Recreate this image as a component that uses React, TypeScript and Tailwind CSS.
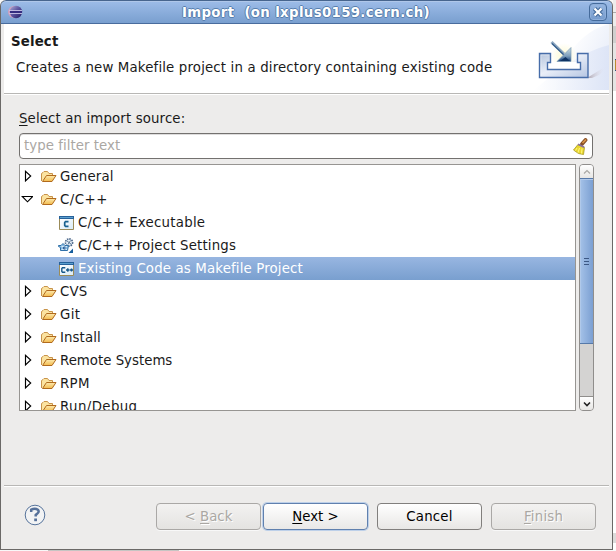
import React from "react";

function EclipseLogo() {
  return (
    <svg className="ml-[7px] h-[14px] w-[15px] shrink-0" viewBox="0 0 15 14">
      <defs>
        <linearGradient id="ecl" x1="0" y1="0" x2="1" y2="1">
          <stop offset="0" stopColor="#b3add6" />
          <stop offset=".45" stopColor="#5d57a2" />
          <stop offset="1" stopColor="#20185f" />
        </linearGradient>
      </defs>
      <ellipse cx="6.2" cy="7" rx="6.2" ry="6.100" fill="#d3a0bd" />
      <ellipse cx="8" cy="7" rx="6.200" ry="6.200" fill="url(#ecl)" />
      <path d="M1 5.5H14M1 8.5H14" stroke="#c8c4e6" strokeWidth=".9" />
      <path d="M2 7H14" stroke="#342d80" strokeWidth="2" />
    </svg>
  );
}

function ImportBanner() {
  return (
    <svg className="h-[66px] w-[75px] shrink-0" viewBox="0 0 75 66">
      <defs>
        <linearGradient id="bnA" x1="0" y1="0" x2="1" y2=".6">
          <stop offset=".3" stopColor="#fff" />
          <stop offset="1" stopColor="#e8edf9" />
        </linearGradient>
        <linearGradient id="bnB">
          <stop offset="0" stopColor="#fff" />
          <stop offset="1" stopColor="#dbe3f6" />
        </linearGradient>
        <linearGradient id="tray" x1="0" y1="0" x2="1" y2="1">
          <stop offset="0" stopColor="#b4c4dc" />
          <stop offset=".45" stopColor="#e9eef8" />
          <stop offset="1" stopColor="#b5c5e2" />
        </linearGradient>
        <radialGradient id="glow">
          <stop offset="0" stopColor="#fdfad0" />
          <stop offset="1" stopColor="#fdfad0" stopOpacity="0" />
        </radialGradient>
        <linearGradient id="shade">
          <stop offset="0" stopColor="#a99fa9" />
          <stop offset="1" stopColor="#e4e2ee" stopOpacity="0" />
        </linearGradient>
        <linearGradient id="arrowHead" x1="0" y1="0" x2="0" y2="1">
          <stop offset=".2" stopColor="#b4cbd8" />
          <stop offset=".6" stopColor="#7fa0bd" />
          <stop offset="1" stopColor="#123d79" />
        </linearGradient>
      </defs>
      <path d="M75 0C45 8 28 34 22 66H75Z" fill="url(#bnA)" />
      <path d="M75 21C48 28 25 45 0 66H75Z" fill="url(#bnB)" opacity=".85" />
      <path d="M53 54L69 44Q73 45 65 51L58 54Z" fill="url(#shade)" />
      <circle cx="30" cy="32" r="13" fill="url(#glow)" />
      <path d="M13.500 45.500H46.500V38H13.500Z" fill="#fff" />
      <path d="M5.500 29.500H16.500V38.500H13.500V45.500H46.500V38.500H43.500V29.500H54V53.500H5.500Z" fill="url(#tray)" stroke="#476da9" strokeWidth="1.400" />
      <path d="M7 52V31H15" fill="none" stroke="#fff" strokeOpacity=".35" />
      <path d="M17.500 18L30 30" stroke="#8ea8c1" strokeWidth="3" />
      <path d="M18 19.500L31 32" stroke="#355e8c" strokeWidth="1.300" />
      <path d="M37 23.500V37.500H23Z" fill="url(#arrowHead)" stroke="#7c9bb8" strokeWidth=".7" />
      <path d="M26 37L31.500 33L36 37Z" fill="#0f3463" />
    </svg>
  );
}

function Folder() {
  return (
    <svg className="h-[13px] w-4 shrink-0" viewBox="0 0 16 13">
      <defs>
        <linearGradient id="fold" x1="0" y1="0" x2="0" y2="1">
          <stop offset="0" stopColor="#fdeaaf" />
          <stop offset="1" stopColor="#f2ba4c" />
        </linearGradient>
      </defs>
      <path d="M.5 11V3.500L2 2.500L3 1.500H6.500L8 3.500H11.500V6" fill="#fbe3a0" stroke="#c8934a" />
      <path d="M1.500 11.500L5.500 5.500H15L11 11.500Z" fill="url(#fold)" stroke="#b16a1d" />
    </svg>
  );
}

function CodeIcon({ plus = false }: { plus?: boolean }) {
  return (
    <svg className="h-[14px] w-[15px] shrink-0" viewBox="0 0 15 14">
      <defs>
        <linearGradient id="codebg" x2="1" y2="1">
          <stop stopColor="#fff" />
          <stop offset="1" stopColor="#d8ebf7" />
        </linearGradient>
      </defs>
      <path d="M.5 2.500V13.500H14.500V2.500" fill="url(#codebg)" stroke="#9a8b58" />
      <path d="M0 0H15V3H0Z" fill="#27619a" />
      <path d="M1 1.500H14" stroke="#5ba0cf" />
      {plus ? (
        <path d="M6.300 5.700H3.500L2.800 6.500V9.500L3.500 10.300H6.300M7 8H10.600M8.800 6.200V9.800M11 8H14M12.500 6.500V9.500" fill="none" stroke="#17588a" strokeWidth="1.4" />
      ) : (
        <path d="M9.500 5.700H6.500L5.700 6.500V9.500L6.500 10.300H9.500" fill="none" stroke="#17618f" strokeWidth="1.7" />
      )}
    </svg>
  );
}

function SettingsIcon() {
  return (
    <svg className="h-[15px] w-4 shrink-0" viewBox="0 0 16 15">
      <circle cx="11" cy="4.500" r="3.600" fill="#e5eff8" stroke="#4b6688" strokeWidth="1.6" strokeDasharray="1.5 .9" />
      <path d="M8.500 2.500L13.500 6.500M10 6.500L12.500 2.500" stroke="#4e6b89" strokeWidth=".9" />
      <path d="M.5 7.500H3L5 5.500L7 7.500H10.500L9.500 12.500H2.500V9.500L.5 8.500Z" fill="#8dbce2" stroke="#2f70a9" />
      <path d="M3.500 8.500H9M3.500 11.500H9" stroke="#d5edfb" />
      <path d="M7.500 9H5.700V11H7.500" fill="none" stroke="#24528c" />
      <path d="M15 10.500V15H10.500Z" fill="#155d9c" />
    </svg>
  );
}

function Broom() {
  return (
    <svg className="h-[17px] w-[15px] shrink-0" viewBox="0 0 15 17">
      <path d="M9 6L12.500 2" stroke="#875029" strokeWidth="3.800" strokeLinecap="round" />
      <path d="M9.500 5L13 1.500" stroke="#db9748" strokeWidth="1.700" />
      <path d="M5 6.500L11.500 9.500L10.500 16.500L5.500 15.500L.5 12Z" fill="#ead72f" stroke="#a89a22" strokeWidth=".8" />
      <path d="M4 10L2.500 12.500M6.500 10L5 14.500M9 10.500L8.500 15.500" stroke="#fff782" strokeWidth="1" />
      <path d="M5 6.200L11.200 9.200" stroke="#8b719c" strokeWidth="1.800" />
    </svg>
  );
}

type Item = { label: string; kind: "folder" | "open" | "c" | "settings" | "cpp"; tracking?: string };
const items: Item[] = [
  { label: "General", kind: "folder", tracking: "tracking-[0.15px]" },
  { label: "C/C++", kind: "open", tracking: "tracking-[0.5px]" },
  { label: "C/C++ Executable", kind: "c", tracking: "tracking-[0.25px]" },
  { label: "C/C++ Project Settings", kind: "settings", tracking: "tracking-[0.18px]" },
  { label: "Existing Code as Makefile Project", kind: "cpp", tracking: "tracking-[0.15px]" },
  { label: "CVS", kind: "folder", tracking: "tracking-[0.2px]" },
  { label: "Git", kind: "folder", tracking: "tracking-[0.3px]" },
  { label: "Install", kind: "folder", tracking: "tracking-[0.1px]" },
  { label: "Remote Systems", kind: "folder" },
  { label: "RPM", kind: "folder", tracking: "tracking-[0.3px]" },
  { label: "Run/Debug", kind: "folder", tracking: "tracking-[0.4px]" },
];

function TreeRow({ label, kind, tracking = "" }: Item) {
  const isFolder = kind === "folder" || kind === "open";
  if (!isFolder) {
    return (
      <div className={`flex h-[23px] shrink-0 items-center ${kind === "cpp" ? "bg-linear-to-b from-[#98b6e1] to-[#799fcf] text-white" : ""}`}>
        <span className={`flex w-[19px] shrink-0 ${kind === "settings" ? "ml-[38px] mr-px" : "ml-[39px]"}`}>
          {kind === "settings" ? <SettingsIcon /> : <CodeIcon plus={kind === "cpp"} />}
        </span>
        <span className={tracking}>{label}</span>
      </div>
    );
  }
  return (
    <div className="flex h-[23px] shrink-0 items-center">
      <svg className="ml-px mr-2 h-[13px] w-3 shrink-0" viewBox="0 0 12 13">
        {kind === "open" ? (
          <path d="M1.300 3.500H11.700L6.500 8.800Z" fill="#fff" stroke="#000" strokeWidth="1.100" />
        ) : (
          <path d="M4.500 1.300V11L9.700 6Z" fill="#fff" stroke="#000" strokeWidth="1.150" />
        )}
      </svg>
      <Folder />
      <span className={`ml-[3px] ${tracking}`}>{label}</span>
    </div>
  );
}

function Scrollbar() {
  return (
    <div className="ml-[3px] flex h-[247px] w-[15px] flex-col overflow-hidden rounded-[4px] border border-[#908e8c] bg-[#d4d3d2]">
      <div className="flex h-[13px] shrink-0 items-center justify-center bg-linear-to-b from-white to-[#e7e6e4]">
        <svg className="h-[6px] w-2" viewBox="0 0 8 6"><path d="M1 4.500L4 1.500L7 4.500" fill="none" stroke="#aaa8a5" strokeWidth="1.200" /></svg>
      </div>
      <div className="-mx-px flex h-[166px] shrink-0 flex-col items-center justify-center gap-[2px] border border-[#5679a9] bg-linear-to-r from-[#a5c2e8] to-[#7b9fd2] shadow-[inset_1px_1px_#b0c9ea]">
        <i className="h-px w-[5px] bg-[#3c5884]" /><i className="h-px w-[5px] bg-[#3c5884]" /><i className="h-px w-[5px] bg-[#3c5884]" />
      </div>
      <div className="mt-auto flex h-[14px] shrink-0 items-center justify-center border-t border-[#908e8c] bg-linear-to-b from-white to-[#e7e6e4]">
        <svg className="h-[6px] w-2" viewBox="0 0 8 6"><path d="M1 1.500L4 4.500L7 1.500" fill="none" stroke="#222" strokeWidth="1.600" /></svg>
      </div>
    </div>
  );
}

export default function App() {
  return (
    <div className="h-[551px] w-[616px] overflow-hidden bg-[#f8f8f8] font-['DejaVu_Sans',sans-serif] text-[13.333px] leading-4 text-[#1a1a1a]">
      <div className="flex h-[550px]">
        <main className="flex h-[550px] w-[613px] shrink-0 flex-col overflow-hidden rounded-t-[6px] border-x border-b border-[#6b6967] bg-[#edeceb]">
          <header className="-mx-px flex h-6 shrink-0 items-center rounded-t-[6px] border border-[#496c9d] border-t-[#47658e] bg-linear-to-b from-[#9dbce8] to-[#799fcf] shadow-[inset_0_1px_#afc7e9]">
            <EclipseLogo />
            <h1 className="flex-1 whitespace-pre pt-px text-center font-bold tracking-[0.34px] text-white [text-shadow:1px_0_#587fae,-1px_0_#587fae,0_1px_#587fae,0_-1px_#587fae]">Import  (on lxplus0159.cern.ch)</h1>
            <button className="mr-[5px] flex h-[18px] w-[18px] shrink-0 items-center justify-center rounded-[4px] border border-[#456b9b] bg-linear-to-b from-[#96b6e1] to-[#769bcc] shadow-[inset_0_0_0_1px_#8fafda]">
              <svg className="h-3 w-3" viewBox="0 0 12 12"><path d="M2.500 2.500L9.500 9.500M9.500 2.500L2.500 9.500" stroke="#456b9b" strokeWidth="4.500" /><path d="M2.500 2.500L9.500 9.500M9.500 2.500L2.500 9.500" stroke="#fff" strokeWidth="2.200" /></svg>
            </button>
          </header>
          <section className="ml-[3px] mr-[3px] flex h-[71px] shrink-0 justify-between border-b border-b-white bg-white shadow-[inset_0_-1px_#b8b7b5]">
            <div className="pt-[10px]">
              <h2 className="ml-[7px] font-bold tracking-[0.15px]">Select</h2>
              <p className="ml-3 mt-[10px] whitespace-nowrap tracking-[0.155px]">Creates a new Makefile project in a directory containing existing code</p>
            </div>
            <ImportBanner />
          </section>
          <section className="flex h-[390px] shrink-0 flex-col pl-[18px] pr-[17px] pt-[16px]">
            <label className="h-[22px] tracking-[0.13px]"><span className="underline underline-offset-2">S</span>elect an import source:</label>
            <div className="flex h-[26px] w-[574px] shrink-0 items-center justify-between rounded-[4px] border border-[#73716f] bg-white pl-1 pr-[4px] text-[#aaa7a3] shadow-[inset_0_1px_#dedddd]">
              <span className="tracking-[0.04px]">type filter text</span><Broom />
            </div>
            <div className="mt-[5px] flex">
              <div className="flex h-[247px] w-[557px] shrink-0 flex-col overflow-hidden border border-[#979592] bg-white">
                {items.map((item) => <TreeRow key={item.label} {...item} />)}
              </div>
              <Scrollbar />
            </div>
          </section>
          <footer className="mx-[3px] flex flex-1 items-start border-t border-[#b8b7b5] pt-[17px] shadow-[inset_0_1px_#fff]">
            <svg className="ml-5 mt-px h-[22px] w-[22px] shrink-0" viewBox="0 0 22 22">
              <circle cx="11" cy="11" r="9.800" fill="#f2f3f4" stroke="#56739b" />
              <path d="M7.200 8V5.700Q11 3.700 13.800 5.700C16 8 13.300 9.500 11.700 11V12.500" fill="none" stroke="#56719a" strokeWidth="2.500" />
              <path d="M10.200 14.500H13V17.200H10.200Z" fill="#56719a" />
            </svg>
            <button className="ml-[110px] h-[27px] w-[105px] shrink-0 rounded-[4px] border border-[#aaa8a6] bg-linear-to-b from-[#f3f2f1] to-[#e4e3e1] text-[#aaa7a3] shadow-[0_1px_#f8f8f8] [text-shadow:1px_1px_white]">&lt; <span className="underline underline-offset-2">B</span>ack</button>
            <button className="ml-[2px] h-[27px] w-[105px] shrink-0 rounded-[4px] border border-[#6080ae] bg-linear-to-b from-white to-[#e9e8e7] text-black shadow-[0_0_0_1px_#bdd0e9]"><span className="underline underline-offset-2">N</span>ext &gt;</button>
            <button className="ml-[9px] h-[27px] w-[105px] shrink-0 rounded-[4px] border border-[#817f7d] bg-linear-to-b from-white to-[#e8e7e5] tracking-[0.2px] text-black">Cancel</button>
            <button className="ml-[9px] h-[27px] w-[105px] shrink-0 rounded-[4px] border border-[#aaa8a6] bg-linear-to-b from-[#f3f2f1] to-[#e4e3e1] tracking-[0.2px] text-[#aaa7a3] shadow-[0_1px_#f8f8f8] [text-shadow:1px_1px_white]"><span className="underline underline-offset-2">F</span>inish</button>
          </footer>
        </main>
        <aside className="flex flex-1 flex-col bg-white">
          <div className="h-3 bg-[#edeceb]" />
          <div className="h-[14px] border-t border-[#aaa] bg-[#edeceb]" />
          <div className="h-[17px] bg-[#d0cfce]" />
          <div className="h-[16px] bg-[#e5e4e3]" />
          <div className="flex h-3 justify-end bg-[#e5e4e3]">
            <div className="w-px border-y border-[#334f77] bg-[#bd8b31]" />
          </div>
          <div className="h-5 bg-[#e5e4e3]" />
          <div className="flex-1" />
          <div className="h-[10px] bg-[#dcdbda]" />
          <div className="h-[7px]" />
        </aside>
      </div>
      <div className="ml-12 h-px w-[131px] bg-[#c6c5c3]" />
    </div>
  );
}
